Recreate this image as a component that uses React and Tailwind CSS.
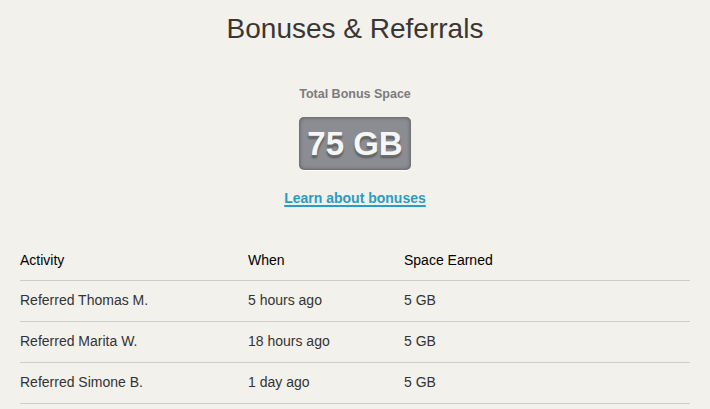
const rows = [
  { activity: "Referred Thomas M.", when: "5 hours ago", space: "5 GB" },
  { activity: "Referred Marita W.", when: "18 hours ago", space: "5 GB" },
  { activity: "Referred Simone B.", when: "1 day ago", space: "5 GB" },
];

const App = () => {
  return (
    <div className="min-h-screen w-full bg-[#f3f1ec] font-['Liberation_Sans',Arial,sans-serif] text-[#222]">
      <h1 className="text-center text-[28px] leading-none pt-[15px] text-[#3b3633]">
        Bonuses &amp; Referrals
      </h1>

      <div className="flex flex-col items-center mt-[45px]">
        <div className="text-[12.5px] font-bold text-[#7b7b7e] leading-none">
          Total Bonus Space
        </div>
        <div className="mt-[16px] w-[112px] h-[53px] rounded-[5px] bg-[#8c8d92] flex items-center justify-center shadow-[inset_0_0_4px_rgba(0,0,0,0.45),0_1px_0_rgba(255,255,255,0.8)]">
          <span className="text-[33px] font-bold text-[#f6f6f6] leading-none [text-shadow:0_2px_0_#6b6b6b,0_3px_2px_rgba(0,0,0,0.4)]">
            75 GB
          </span>
        </div>
        <a
          href="#"
          className="mt-[21px] text-[14px] font-bold text-[#2b9cc0] underline underline-offset-2 decoration-2 leading-none"
        >
          Learn about bonuses
        </a>
      </div>

      <div className="mx-[20px] mt-[45px]">
        <div className="grid grid-cols-[228px_156px_1fr] text-[14px] text-black pb-[9px] border-b border-[#cfcdc8]">
          <div>Activity</div>
          <div>When</div>
          <div>Space Earned</div>
        </div>
        {rows.map((row, i) => (
          <div
            key={i}
            className="grid grid-cols-[228px_156px_1fr] items-center h-[41px] text-[14px] text-[#333] border-b border-[#cfcdc8]"
          >
            <div>{row.activity}</div>
            <div>{row.when}</div>
            <div>{row.space}</div>
          </div>
        ))}
      </div>
    </div>
  );
};

export default App;
